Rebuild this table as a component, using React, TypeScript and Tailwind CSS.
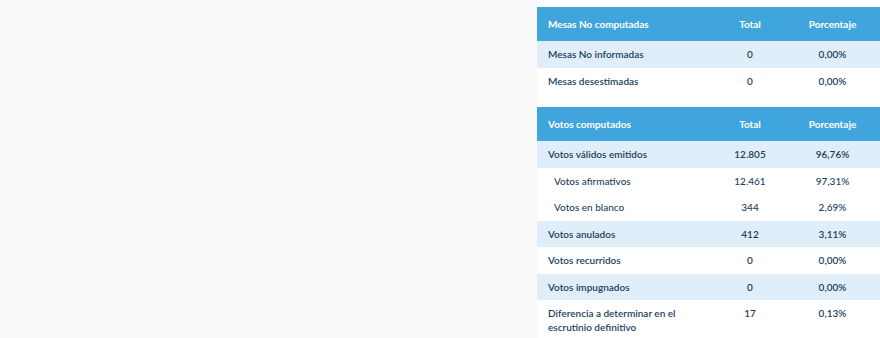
import React from 'react'

type Row = { label: string; total: string; pct: string; shade?: boolean; indent?: boolean }

const mesas: Row[] = [
  { label: 'Mesas No informadas', total: '0', pct: '0,00%', shade: true },
  { label: 'Mesas desestimadas', total: '0', pct: '0,00%' },
]

const votos: Row[] = [
  { label: 'Votos válidos emitidos', total: '12.805', pct: '96,76%', shade: true },
  { label: 'Votos afirmativos', total: '12.461', pct: '97,31%', indent: true },
  { label: 'Votos en blanco', total: '344', pct: '2,69%', indent: true },
  { label: 'Votos anulados', total: '412', pct: '3,11%', shade: true },
  { label: 'Votos recurridos', total: '0', pct: '0,00%' },
  { label: 'Votos impugnados', total: '0', pct: '0,00%', shade: true },
  { label: 'Diferencia a determinar en el escrutinio definitivo', total: '17', pct: '0,13%' },
]

function Table({ title, rows }: { title: string; rows: Row[] }) {
  return (
    <div>
      {/* Header */}
      <div className="grid grid-cols-[178px_70px_95px] h-[34px] items-center bg-[#41a5dd] text-white font-bold text-[10px]">
        <div className="pl-[11px]">{title}</div>
        <div className="text-center">Total</div>
        <div className="text-center">Porcentaje</div>
      </div>
      {rows.map(r => (
        <div
          key={r.label}
          className={`grid grid-cols-[178px_70px_95px] min-h-[26.5px] items-center text-[10px] text-[#1d3f5e] ${
            r.shade ? 'bg-[#dfeef8]' : 'bg-white'
          }`}
        >
          <div className={`${r.indent ? 'pl-[17px] font-medium' : 'pl-[11px] font-semibold'} py-[6px] leading-[14px] pr-2`}>
            {r.label}
          </div>
          <div className={`text-center self-start pt-[6px] leading-[14px] ${r.indent ? 'font-medium' : 'font-semibold'}`}>
            {r.total}
          </div>
          <div className={`text-center self-start pt-[6px] leading-[14px] ${r.indent ? 'font-medium' : 'font-semibold'}`}>
            {r.pct}
          </div>
        </div>
      ))}
    </div>
  )
}

export default function App() {
  return (
    <div className="flex w-[880px] h-[338px] overflow-hidden bg-[#fafafa] font-['Lato','Open_Sans',sans-serif]">
      <div className="flex-1" />
      <div className="w-[343px] bg-white pt-[7px] flex flex-col gap-[13px]">
        <Table title="Mesas No computadas" rows={mesas} />
        <Table title="Votos computados" rows={votos} />
      </div>
    </div>
  )
}
